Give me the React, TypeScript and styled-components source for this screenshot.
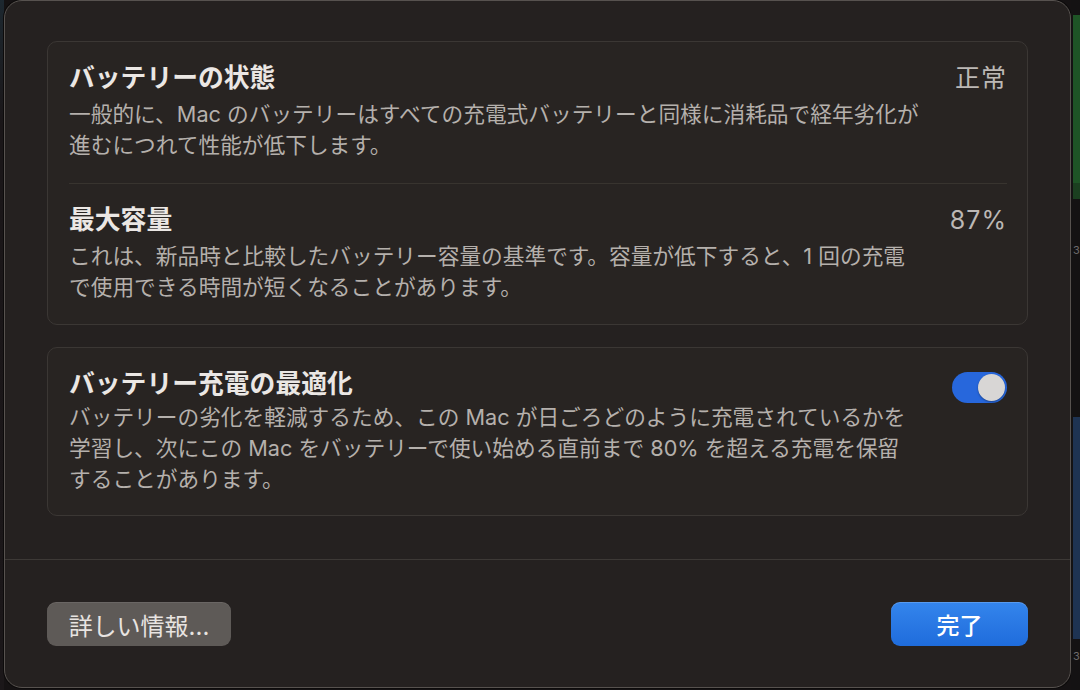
import React from "react";
import styled, { createGlobalStyle } from "styled-components";

const GlobalStyle = createGlobalStyle`
  html, body {
    margin: 0;
    padding: 0;
    background: #151213;
  }
  body {
    font-family: "Inter", "Noto Sans CJK JP", "Noto Sans", sans-serif;
    -webkit-font-smoothing: antialiased;
  }
`;

const Page = styled.div`
  display: flex;
  width: 1080px;
  height: 690px;
  overflow: hidden;
  background: #151213;
`;

const LeftStrip = styled.div`
  width: 4px;
  flex: none;
  background: linear-gradient(180deg, #1d2830 0%, #1a1618 18%, #1b1719 100%);
`;

const RightStrip = styled.div`
  width: 9px;
  flex: none;
  display: flex;
  flex-direction: column;
  padding-left: 2px;
  box-sizing: border-box;
  background: #141213;
  overflow: hidden;
`;

const StripBlock = styled.div<{ $color: string; $h: number; $mt?: number }>`
  height: ${(p) => p.$h}px;
  margin-top: ${(p) => p.$mt ?? 0}px;
  background: ${(p) => p.$color};
  flex: none;
`;

const StripGlyph = styled.div<{ $mt: number }>`
  margin-top: ${(p) => p.$mt}px;
  font-size: 11px;
  line-height: 14px;
  color: #6d6a6a;
  white-space: nowrap;
  flex: none;
`;

const Sheet = styled.div`
  width: 1067px;
  height: 688px;
  flex: none;
  box-sizing: border-box;
  display: flex;
  flex-direction: column;
  background: #252120;
  border: 1px solid #57524f;
  border-radius: 18px;
  box-shadow: 0 0 0 1px #0d0b0b;
`;

const Body = styled.div`
  display: flex;
  flex-direction: column;
  gap: 22px;
  padding: 40px 42px 0;
`;

const Card = styled.div`
  display: flex;
  flex-direction: column;
  padding: 0 20px;
  background: #282422;
  border: 1px solid #3b3734;
  border-radius: 10px;
`;

const Row = styled.div<{ $pb: number }>`
  display: flex;
  justify-content: space-between;
  align-items: flex-start;
  padding: 20px 0 ${(p) => p.$pb}px 1px;
`;

const TextCol = styled.div<{ $gap: number }>`
  display: flex;
  flex-direction: column;
  gap: ${(p) => p.$gap}px;
`;

const Title = styled.div`
  font-size: 25.8px;
  line-height: 32px;
  font-weight: 700;
  color: #ebe7e4;
  white-space: nowrap;
`;

const Desc = styled.div`
  font-size: 21.7px;
  line-height: 31px;
  color: #b5b0ac;
  white-space: nowrap;
`;

const Value = styled.div`
  font-size: 25px;
  line-height: 32px;
  color: #bcb8b5;
  letter-spacing: 0.04em;
  white-space: nowrap;
`;

const Divider = styled.div`
  height: 1px;
  margin-left: 1px;
  background: #38342f;
`;

const Toggle = styled.div`
  width: 55px;
  height: 31px;
  margin-top: 4px;
  box-sizing: border-box;
  padding: 2px;
  border-radius: 16px;
  background: #2767dc;
  display: flex;
  justify-content: flex-end;
  align-items: center;
`;

const Knob = styled.div`
  width: 27px;
  height: 27px;
  border-radius: 50%;
  background: #d8d6d5;
  box-shadow: 0 1px 2px rgba(0, 0, 0, 0.35);
`;

const Separator = styled.div`
  height: 1px;
  margin-top: 43px;
  background: #3d3936;
`;

const Footer = styled.div`
  display: flex;
  justify-content: space-between;
  align-items: center;
  padding: 42px 42px 0;
`;

const Button = styled.button<{ $primary?: boolean }>`
  height: 44px;
  width: ${(p) => (p.$primary ? "137px" : "184px")};
  box-sizing: border-box;
  padding: 0;
  border: none;
  border-radius: 9px;
  font-family: inherit;
  font-size: ${(p) => (p.$primary ? 23 : 24)}px;
  font-weight: ${(p) => (p.$primary ? 500 : 400)};
  color: ${(p) => (p.$primary ? "#ffffff" : "#e8e4e1")};
  background: ${(p) =>
    p.$primary
      ? "linear-gradient(180deg, #3485ec 0%, #1f6cdc 100%)"
      : "#5e5a57"};
  box-shadow: ${(p) =>
    p.$primary
      ? "inset 0 1px 0 rgba(255,255,255,0.18)"
      : "inset 0 1px 0 rgba(255,255,255,0.08)"};
  white-space: nowrap;
  cursor: default;
`;

export default function App() {
  return (
    <>
      <GlobalStyle />
      <Page>
        <LeftStrip />
        <Sheet>
          <Body>
            <Card>
              <Row $pb={22}>
                <TextCol $gap={5}>
                  <Title>バッテリーの状態</Title>
                  <Desc>
                    一般的に、Mac のバッテリーはすべての充電式バッテリーと同様に消耗品で経年劣化が
                    <br />
                    進むにつれて性能が低下します。
                  </Desc>
                </TextCol>
                <Value>正常</Value>
              </Row>
              <Divider />
              <Row $pb={21}>
                <TextCol $gap={5}>
                  <Title>最大容量</Title>
                  <Desc>
                    これは、新品時と比較したバッテリー容量の基準です。容量が低下すると、1 回の充電
                    <br />
                    で使用できる時間が短くなることがあります。
                  </Desc>
                </TextCol>
                <Value>87%</Value>
              </Row>
            </Card>
            <Card>
              <Row $pb={20}>
                <TextCol $gap={2}>
                  <Title>バッテリー充電の最適化</Title>
                  <Desc>
                    バッテリーの劣化を軽減するため、この Mac が日ごろどのように充電されているかを
                    <br />
                    学習し、次にこの Mac をバッテリーで使い始める直前まで 80% を超える充電を保留
                    <br />
                    することがあります。
                  </Desc>
                </TextCol>
                <Toggle>
                  <Knob />
                </Toggle>
              </Row>
            </Card>
          </Body>
          <Separator />
          <Footer>
            <Button>詳しい情報...</Button>
            <Button $primary>完了</Button>
          </Footer>
        </Sheet>
        <RightStrip>
          <StripBlock $color="#1e5426" $h={168} $mt={15} />
          <StripBlock $color="#1b3f20" $h={16} />
          <StripGlyph $mt={44}>3</StripGlyph>
          <StripBlock $color="#1e3352" $h={222} $mt={160} />
          <StripGlyph $mt={10}>3</StripGlyph>
        </RightStrip>
      </Page>
    </>
  );
}
